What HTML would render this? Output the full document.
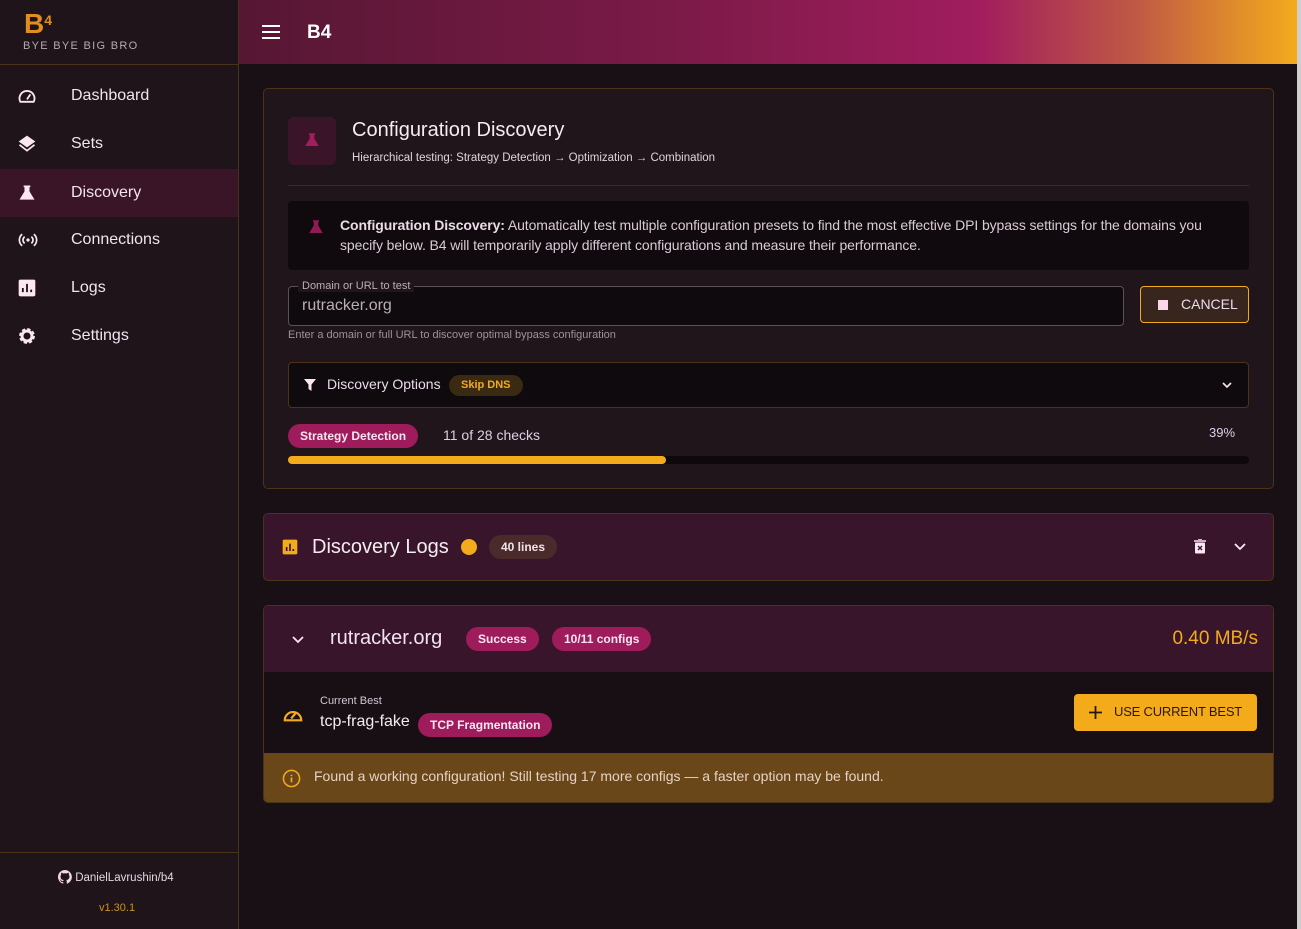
<!DOCTYPE html>
<html><head><meta charset="utf-8"><style>
*{box-sizing:border-box;margin:0;padding:0}
body{width:1301px;height:929px;overflow:hidden;background:#181015;font-family:"Liberation Sans",sans-serif;color:#f3e6ee;position:relative}
.side{position:absolute;left:0;top:0;width:239px;height:929px;background:#1e141a;border-right:1px solid #4a3216}
.logo{height:65px;border-bottom:1px solid #4a3216;position:relative}
.nav{position:absolute;left:0;width:238px;height:48px;font-size:16px;color:#f0e4ef}
.nav span{position:absolute;left:71px;top:15px}
.nav svg{position:absolute;left:17px;top:14px}
.hdr{position:absolute;left:239px;top:0;width:1058px;height:64px;background:linear-gradient(90deg,#561733 0%,#7a1a47 40%,#a11d5e 70%,#c05a44 85%,#f3ab1c 100%)}
.sb{position:absolute;left:1297px;top:0;width:4px;height:929px;background:#cfcfcf}
.card{position:absolute;left:263px;width:1011px;border:1px solid #4a3418;border-radius:5px;background:#1f151b}
.pill{display:inline-block;border-radius:12px;background:#9e1b5c;color:#fbe6f1;font-weight:bold;font-size:12px;padding:0 12px;height:24px;line-height:24px}
.abs{position:absolute}
</style></head><body>
<div class="side">
 <div class="logo">
  <div class="abs" style="left:24px;top:10px;font-size:28px;font-weight:bold;color:#e38d1e;line-height:28px">B<sup style="font-size:14px;position:relative;top:-4px;vertical-align:top">4</sup></div>
  <div class="abs" style="left:23px;top:40px;font-size:11px;letter-spacing:1.3px;color:#b9a9b3">BYE BYE BIG BRO</div>
 </div>
 <div class="nav" style="top:72px"><svg width="20" height="20" viewBox="0 0 24 24"><path d="M4 19a9 9 0 1 1 16 0z" fill="none" stroke="#fbe6f1" stroke-width="2.2"/><path d="M12 16l4-6" stroke="#fbe6f1" stroke-width="2.2"/></svg><span>Dashboard</span></div>
 <div class="nav" style="top:120px"><svg width="20" height="20" viewBox="0 0 24 24"><path d="M12 2 2 9l10 7 10-7z" fill="#fbe6f1"/><path d="M3 13l9 7 9-7" fill="none" stroke="#fbe6f1" stroke-width="2"/></svg><span>Sets</span></div>
 <div class="nav" style="top:169px;background:#3a1528"><svg width="20" height="20" viewBox="0 0 24 24"><path d="M8 3h8v2h-1v5l6 10H3l6-10V5H8z" fill="#fbe6f1"/></svg><span>Discovery</span></div>
 <div class="nav" style="top:216px"><svg width="22" height="20" viewBox="0 0 24 24"><circle cx="12" cy="12" r="2" fill="#fbe6f1"/><path d="M8 8a5 5 0 0 0 0 8M16 8a5 5 0 0 1 0 8M5 5a9 9 0 0 0 0 14M19 5a9 9 0 0 1 0 14" fill="none" stroke="#fbe6f1" stroke-width="2"/></svg><span>Connections</span></div>
 <div class="nav" style="top:264px"><svg width="20" height="20" viewBox="0 0 24 24"><rect x="2" y="2" width="20" height="20" rx="2" fill="#fbe6f1"/><path d="M7 17v-5M12 17V7M17 17v-3" stroke="#1e141a" stroke-width="2.2"/></svg><span>Logs</span></div>
 <div class="nav" style="top:312px"><svg width="20" height="20" viewBox="0 0 24 24"><circle cx="12" cy="12" r="7" fill="none" stroke="#fbe6f1" stroke-width="5" stroke-dasharray="3.3 2.2"/><circle cx="12" cy="12" r="6" fill="none" stroke="#fbe6f1" stroke-width="3.5"/></svg><span>Settings</span></div>
 <div class="abs" style="left:0;top:852px;width:238px;border-top:1px solid #4a3216"></div>
 <div class="abs" style="left:58px;top:870px;font-size:11.5px;color:#e6d6e2"><svg width="14" height="14" viewBox="0 0 16 16" style="vertical-align:-3px"><path fill="#f5d6e6" d="M8 0a8 8 0 0 0-2.5 15.6c.4 0 .5-.2.5-.4v-1.5c-2.200.5-2.700-1-2.700-1-.4-.9-.9-1.200-.9-1.200-.7-.5.1-.5.1-.5.8.1 1.200.8 1.200.8.7 1.300 1.900.9 2.300.7.1-.5.3-.9.5-1.100-1.800-.2-3.600-.9-3.600-4 0-.9.3-1.600.8-2.100-.1-.2-.4-1 .1-2.100 0 0 .7-.2 2.200.8a7.500 7.500 0 0 1 4 0c1.500-1 2.200-.8 2.200-.8.4 1.100.2 1.900.1 2.100.5.6.8 1.300.8 2.100 0 3.100-1.900 3.800-3.600 4 .3.3.5.8.5 1.500v2.200c0 .2.1.5.6.4A8 8 0 0 0 8 0z"/></svg> DanielLavrushin/b4</div>
 <div class="abs" style="left:99px;top:902px;font-size:11px;color:#c9951e">v1.30.1</div>
</div>
<div class="hdr">
 <svg class="abs" style="left:23px;top:25px" width="18" height="14" viewBox="0 0 18 14"><path d="M0 1h18M0 7h18M0 13h18" stroke="#fff" stroke-width="2"/></svg>
 <div class="abs" style="left:68px;top:22px;font-size:19px;font-weight:bold;color:#fff">B4</div>
</div>
<div class="sb"></div>

<div class="card" style="top:88px;height:401px">
 <div class="abs" style="left:24px;top:28px;width:48px;height:48px;border-radius:6px;background:#3a1428"><svg class="abs" style="left:15px;top:14px" width="18" height="18" viewBox="0 0 24 24"><path d="M8 3h8v2h-1v5l6 10H3l6-10V5H8z" fill="#a11d5e"/></svg></div>
 <div class="abs" style="left:88px;top:30px;font-size:20px;color:#f5ecf2">Configuration Discovery</div>
 <div class="abs" style="left:88px;top:63px;font-size:11.5px;color:#e0d2dc">Hierarchical testing: Strategy Detection → Optimization → Combination</div>
 <div class="abs" style="left:24px;top:96px;width:961px;border-top:1px solid #3d2a26"></div>
 <div class="abs" style="left:24px;top:112px;width:961px;height:69px;background:#100a0e;border-radius:4px">
  <svg class="abs" style="left:19px;top:17px" width="18" height="18" viewBox="0 0 24 24"><path d="M8 3h8v2h-1v5l6 10H3l6-10V5H8z" fill="#8e1b52"/></svg>
  <div class="abs" style="left:52px;top:14px;width:905px;font-size:14px;line-height:20px;color:#d9cbd6;letter-spacing:-0.1px"><b style="color:#e9dce6">Configuration Discovery:</b> Automatically test multiple configuration presets to find the most effective DPI bypass settings for the domains you specify below. B4 will temporarily apply different configurations and measure their performance.</div>
 </div>
 <div class="abs" style="left:24px;top:197px;width:836px;height:40px;border:1px solid #5a5058;border-radius:4px;background:#0f0a0e">
  <div class="abs" style="left:13px;top:10px;font-size:16px;color:#b9aeb6">rutracker.org</div>
 </div>
 <div class="abs" style="left:34px;top:191px;padding:0 4px;background:#1f151b;font-size:11px;color:#b9aeb6;line-height:12px">Domain or URL to test</div>
 <div class="abs" style="left:24px;top:240px;font-size:11px;color:#9e929b">Enter a domain or full URL to discover optimal bypass configuration</div>
 <div class="abs" style="left:876px;top:197px;width:109px;height:37px;border:1px solid #f3ab1c;border-radius:4px;background:#38251d">
  <div class="abs" style="left:17px;top:13px;width:10px;height:10px;background:#fbd6e9"></div>
  <div class="abs" style="left:40px;top:9px;font-size:14px;color:#e8ddf0">CANCEL</div>
 </div>
 <div class="abs" style="left:24px;top:273px;width:961px;height:46px;border:1px solid #4a3418;border-radius:4px;background:#0f0a0e">
  <svg class="abs" style="left:15px;top:16px" width="12" height="12" viewBox="0 0 12 12"><path d="M0 0h12L7.5 5.5V12L4.5 10V5.5z" fill="#fbe6f1"/></svg>
  <div class="abs" style="left:38px;top:13px;font-size:14px;color:#eadcea">Discovery Options</div>
  <div class="abs" style="left:160px;top:12px;height:21px;line-height:21px;padding:0 12px;border-radius:11px;background:#3b2a12;color:#f3ab1c;font-size:11px;font-weight:bold">Skip DNS</div>
  <svg class="abs" style="left:933px;top:19px" width="10" height="7" viewBox="0 0 10 7"><path d="M1 1l4 4 4-4" fill="none" stroke="#fbe6f1" stroke-width="1.6"/></svg>
 </div>
 <div class="pill abs" style="left:24px;top:335px;height:24px">Strategy Detection</div>
 <div class="abs" style="left:179px;top:338px;font-size:14px;color:#ddd0e6">11 of 28 checks</div>
 <div class="abs" style="left:945px;top:336px;font-size:13px;color:#ddd0e6">39%</div>
 <div class="abs" style="left:24px;top:367px;width:961px;height:8px;border-radius:4px;background:#0d080b"><div style="width:378px;height:8px;border-radius:4px;background:#f3ab1c"></div></div>
</div>

<div class="card" style="top:513px;height:68px;background:#38152a">
 <svg class="abs" style="left:18px;top:25px" width="16" height="16" viewBox="0 0 24 24"><rect x="1" y="1" width="22" height="22" rx="2" fill="#f3ab1c"/><path d="M7 18v-6M12 18V7M17 18v-3" stroke="#38152a" stroke-width="2.5"/></svg>
 <div class="abs" style="left:48px;top:22px;font-size:20px;color:#f5ecf2">Discovery Logs</div>
 <div class="abs" style="left:197px;top:25px;width:16px;height:16px;border-radius:50%;background:#f3ab1c"></div>
 <div class="abs" style="left:225px;top:21px;height:24px;line-height:24px;padding:0 12px;border-radius:12px;background:#4a2a2a;color:#f0e4ea;font-size:12px;font-weight:bold">40 lines</div>
 <svg class="abs" style="left:930px;top:25px" width="12" height="15" viewBox="0 0 12 15"><path d="M0 2h12M4 0h4" stroke="#fbe6f1" stroke-width="1.6"/><rect x="1" y="3.5" width="10" height="11" rx="1" fill="#fbe6f1"/><path d="M4 7l4 4M8 7l-4 4" stroke="#38152a" stroke-width="1.4"/></svg>
 <svg class="abs" style="left:970px;top:29px" width="12" height="8" viewBox="0 0 12 8"><path d="M1 1l5 5 5-5" fill="none" stroke="#fbe6f1" stroke-width="1.8"/></svg>
</div>

<div class="card" style="top:605px;height:198px;background:#180f15;overflow:hidden">
 <div class="abs" style="left:0;top:0;width:1011px;height:66px;background:#38152a">
  <svg class="abs" style="left:28px;top:30px" width="12" height="8" viewBox="0 0 12 8"><path d="M1 1l5 5 5-5" fill="none" stroke="#fbe6f1" stroke-width="1.8"/></svg>
  <div class="abs" style="left:66px;top:21px;font-size:20px;color:#f0e4ef">rutracker.org</div>
  <div class="pill abs" style="left:202px;top:21px">Success</div>
  <div class="pill abs" style="left:288px;top:21px">10/11 configs</div>
  <div class="abs" style="right:17px;top:22px;font-size:19px;color:#f3ab1c">0.40 MB/s</div>
 </div>
 <svg class="abs" style="left:18px;top:96px" width="22" height="22" viewBox="0 0 24 24"><path d="M3 20a9 9 0 1 1 18 0z" fill="none" stroke="#f3ab1c" stroke-width="2.4"/><path d="M10 18l5-6" stroke="#f3ab1c" stroke-width="2.4"/></svg>
 <div class="abs" style="left:56px;top:89px;font-size:11px;color:#d4c6d2">Current Best</div>
 <div class="abs" style="left:56px;top:107px;font-size:16px;color:#f5ecf2">tcp-frag-fake</div>
 <div class="pill abs" style="left:154px;top:107px">TCP Fragmentation</div>
 <div class="abs" style="left:810px;top:88px;width:183px;height:37px;border-radius:4px;background:#f3ab1c">
  <svg class="abs" style="left:15px;top:12px" width="13" height="13" viewBox="0 0 13 13"><path d="M6.5 0v13M0 6.5h13" stroke="#2a1810" stroke-width="1.8"/></svg>
  <div class="abs" style="left:40px;top:10px;font-size:13px;color:#2a1810;letter-spacing:-0.2px">USE CURRENT BEST</div>
 </div>
 <div class="abs" style="left:0;top:147px;width:1011px;height:51px;background:#6a4719">
  <svg class="abs" style="left:18px;top:16px" width="19" height="19" viewBox="0 0 20 20"><circle cx="10" cy="10" r="8.5" fill="none" stroke="#f3ab1c" stroke-width="1.6"/><path d="M10 9v5M10 6v1.5" stroke="#f3ab1c" stroke-width="1.8"/></svg>
  <div class="abs" style="left:50px;top:15px;font-size:14px;color:#e6d2c4">Found a working configuration! Still testing 17 more configs — a faster option may be found.</div>
 </div>
</div>
</body></html>
